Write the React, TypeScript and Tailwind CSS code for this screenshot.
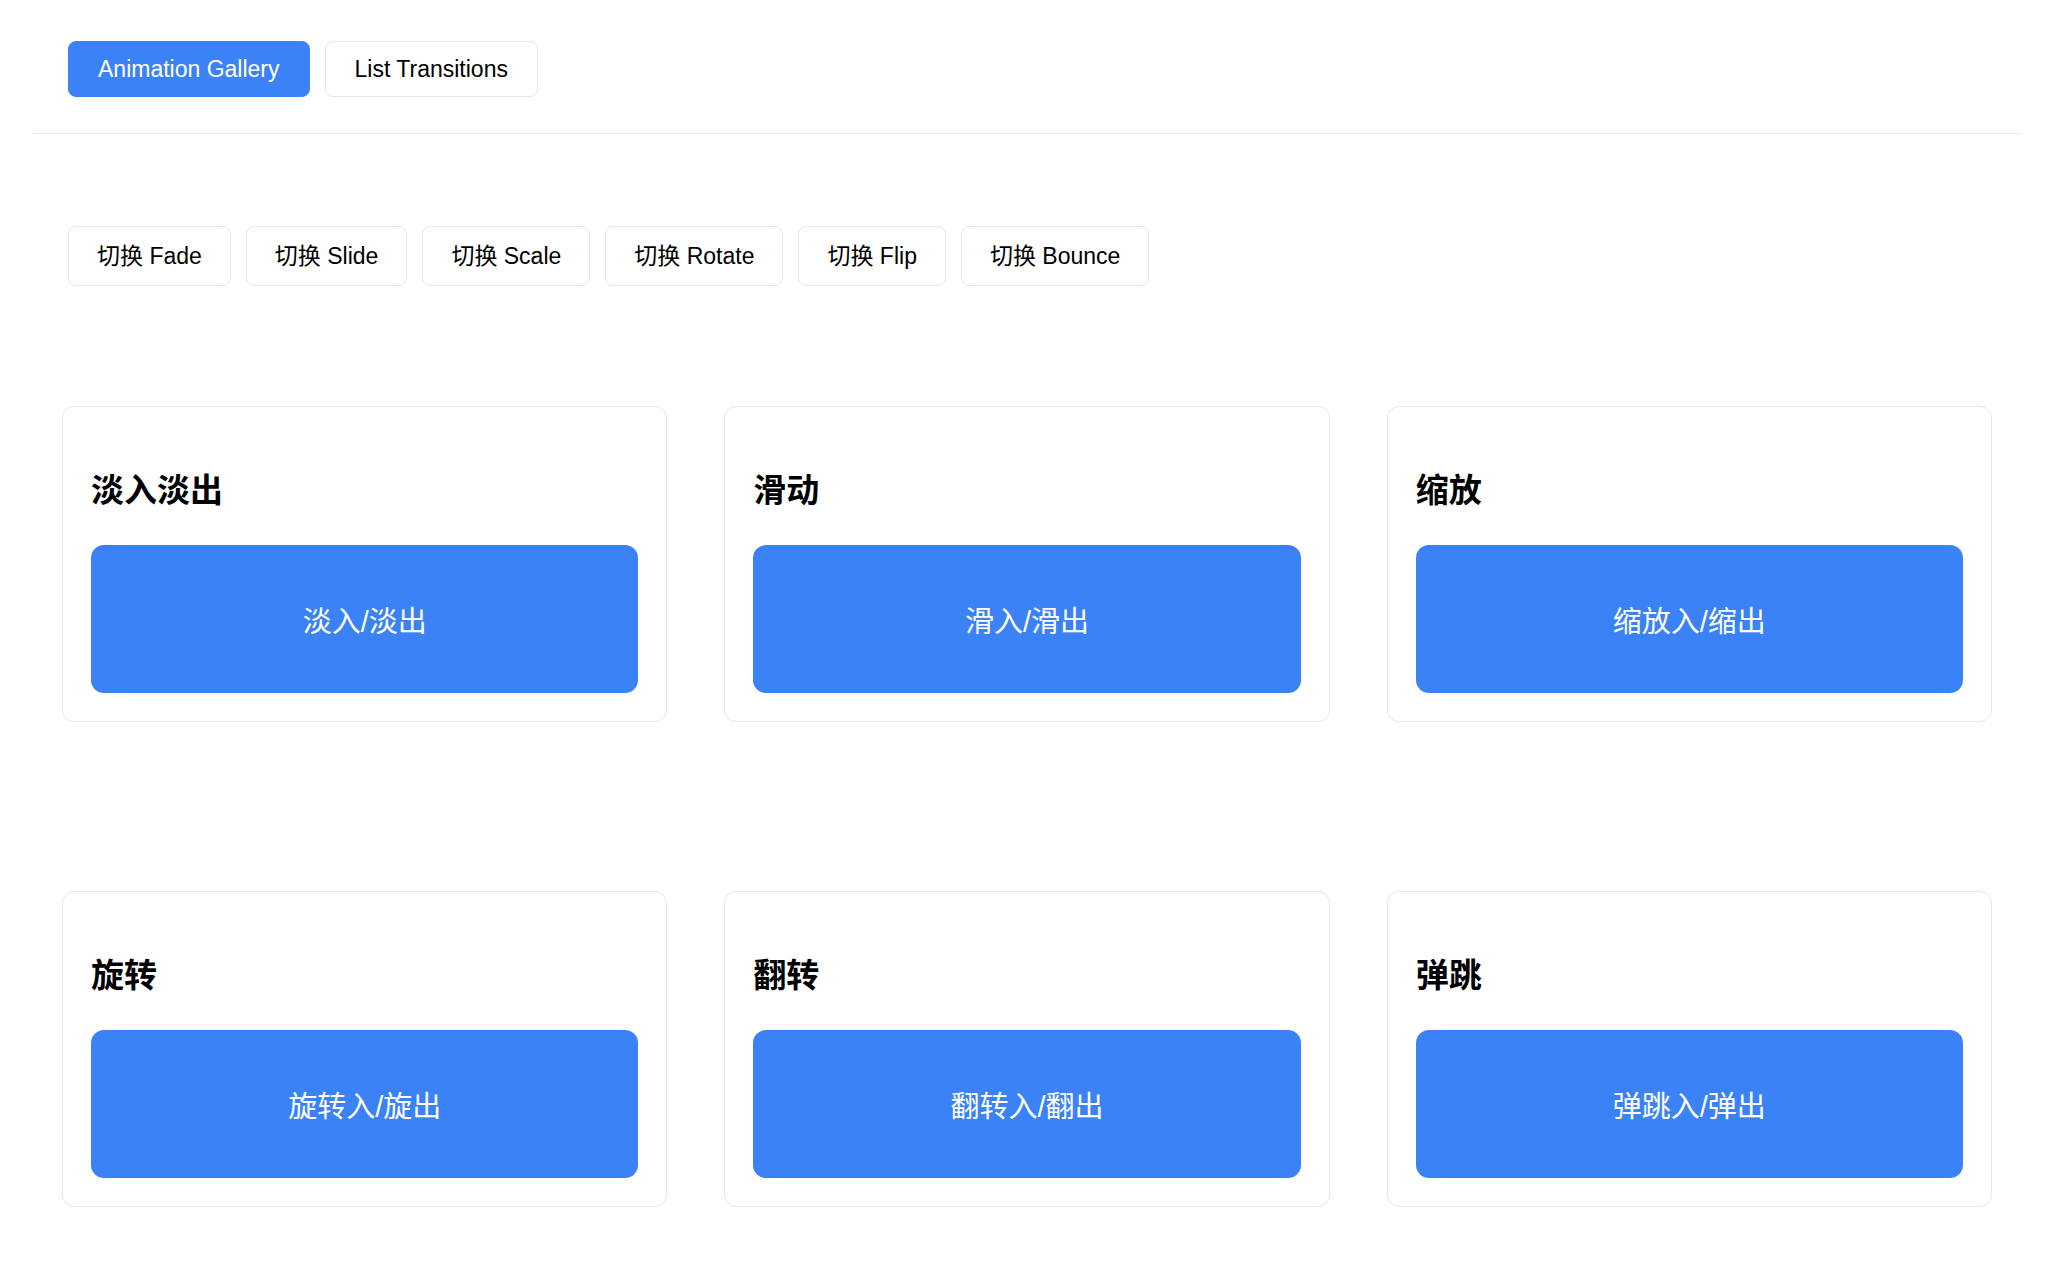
import React from "react"

const font = "font-['Liberation_Sans','Noto_Sans_CJK_SC',sans-serif]"

const toggles = ["Fade", "Slide", "Scale", "Rotate", "Flip", "Bounce"]

const cards = [
    { title: "淡入淡出", label: "淡入/淡出" },
    { title: "滑动", label: "滑入/滑出" },
    { title: "缩放", label: "缩放入/缩出" },
    { title: "旋转", label: "旋转入/旋出" },
    { title: "翻转", label: "翻转入/翻出" },
    { title: "弹跳", label: "弹跳入/弹出" },
]

export default function App() {
    return (
        <div className={`min-h-screen bg-white text-black pl-[33px] pr-[43px] ${font}`}>
            <nav className="flex gap-[15px] pl-[35px] pt-[41px] pb-[36px] border-b border-[#e5e7eb]">
                <button className="h-[56px] px-[29px] rounded-[8px] bg-[#3b82f6] border border-[#3b82f6] text-white text-[23px]">
                    Animation Gallery
                </button>
                <button className="h-[56px] px-[29px] rounded-[8px] bg-white border border-[#e5e7eb] text-[23px]">
                    List Transitions
                </button>
            </nav>

            <main className="px-[29px] pb-[60px]">
                <div className="flex gap-[15px] pl-[6px] mt-[92px]">
                    {toggles.map((t) => (
                        <button key={t} className="h-[60px] px-[28px] rounded-[8px] bg-white border border-[#e5e7eb] text-[23px]">
                            切换 {t}
                        </button>
                    ))}
                </div>

                <div className="grid grid-cols-3 gap-x-[57px] gap-y-[169px] mt-[120px]">
                    {cards.map((c) => (
                        <div key={c.title} className="rounded-[12px] border border-[#e5e7eb] px-[28px] pt-[28px] pb-[28px]">
                            <h3 className="mt-[32px] mb-[30px] h-[48px] leading-[48px] text-[33px] font-bold">{c.title}</h3>
                            <div className="h-[148px] pt-[7px] rounded-[13px] bg-[#3b82f6] flex items-center justify-center text-white text-[29px]">
                                {c.label}
                            </div>
                        </div>
                    ))}
                </div>
            </main>
        </div>
    )
}
